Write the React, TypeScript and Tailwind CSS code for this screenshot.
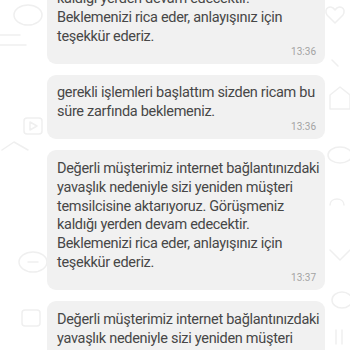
import React from "react";

const longMsg = [
  "Değerli müşterimiz internet bağlantınızdaki",
  "yavaşlık nedeniyle sizi yeniden müşteri",
  "temsilcisine aktarıyoruz. Görüşmeniz",
  "kaldığı yerden devam edecektir.",
  "Beklemenizi rica eder, anlayışınız için",
  "teşekkür ederiz.",
];

const messages = [
  { lines: longMsg, time: "13:36" },
  {
    lines: ["gerekli işlemleri başlattım sizden ricam bu", "süre zarfında beklemeniz."],
    time: "13:36",
  },
  { lines: longMsg, time: "13:37" },
  { lines: longMsg, time: "13:37" },
];

// faint doodle wallpaper behind the chat
function Wallpaper() {
  return (
    <svg
      className="absolute inset-0 w-full h-full"
      viewBox="0 0 350 350"
      fill="none"
      stroke="#efefef"
      strokeWidth={1.5}
      strokeLinecap="round"
      strokeLinejoin="round"
    >
      <ellipse cx="28" cy="15" rx="14" ry="10" />
      <path d="M0 35h20M0 45h26" />
      <rect x="24" y="118" width="18" height="16" rx="3" />
      <path d="M30 122l7 4-7 4z" />
      <path d="M2 150l12-8 14 8" />
      <ellipse cx="33" cy="262" rx="14" ry="10" />
      <path d="M28 262h10" />
      <rect x="22" y="310" width="18" height="16" rx="3" />
      <path d="M335 10c-4-6 -12-2-8 5l8 8 8-8c4-7-4-11-8-5z" />
      <path d="M332 60l6 6" />
      <path d="M330 95l10-8 10 8v14h-20z" />
      <ellipse cx="340" cy="155" rx="12" ry="8" />
      <path d="M330 205c0-8 14-8 14 0" />
      <path d="M330 250l10 10 10-10" />
      <ellipse cx="342" cy="300" rx="10" ry="8" />
      <path d="M336 330v14M342 330v14" />
    </svg>
  );
}

export default function App() {
  return (
    <div
      className="relative w-[350px] h-[350px] overflow-hidden bg-white"
      style={{ fontFamily: "Roboto, 'Noto Sans', sans-serif" }}
    >
      <Wallpaper />
      <div className="relative flex flex-col gap-[11px] -mt-[76px]">
        {messages.map((m, i) => (
          <div
            key={i}
            className="ml-[47px] w-[278px] rounded-[9px] bg-[#f1f1f1] pl-[10px] pr-[9px] pt-[9.5px] pb-[6px]"
          >
            <p className="text-[14.5px] leading-[18.9px] text-[#474747] tracking-[-0.3px] whitespace-nowrap">
              {m.lines.map((l, j) => (
                <React.Fragment key={j}>
                  {l}
                  {j < m.lines.length - 1 && <br />}
                </React.Fragment>
              ))}
            </p>
            <div className="text-right text-[10px] leading-[12px] -mt-[1px] text-[#a3a3a3]">
              {m.time}
            </div>
          </div>
        ))}
      </div>
    </div>
  );
}
